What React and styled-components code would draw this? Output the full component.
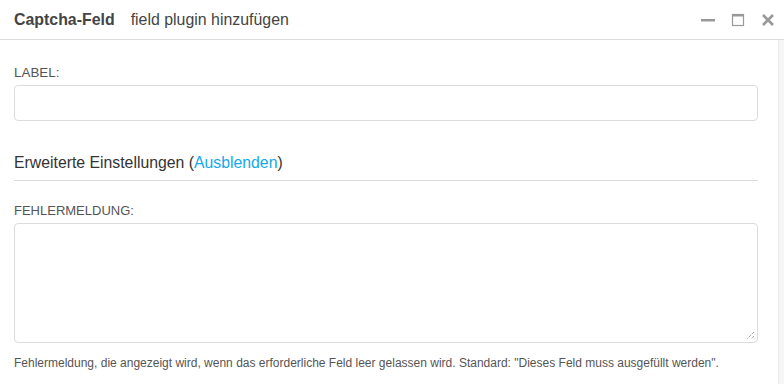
import React from 'react';
import styled, { createGlobalStyle } from 'styled-components';

const GlobalStyle = createGlobalStyle`
  html, body {
    margin: 0;
    padding: 0;
    background: #fff;
    font-family: "Liberation Sans", Arial, sans-serif;
    color: #333;
  }
`;

const Dialog = styled.div`
  width: 784px;
  height: 384px;
  display: flex;
  flex-direction: column;
  overflow: hidden;
`;

const Header = styled.div`
  height: 40px;
  display: flex;
  align-items: center;
  padding: 1px 9px 0 14px;
  border-bottom: 1px solid #dcdcdc;
  box-sizing: border-box;
  flex-shrink: 0;
`;

const Title = styled.span`
  font-size: 15.9px;
  font-weight: bold;
  color: #444;
  margin-right: 16px;
`;

const Subtitle = styled.span`
  font-size: 15.9px;
  color: #444;
  flex: 1;
`;

const WindowButtons = styled.div`
  display: flex;
  align-items: center;
  gap: 16px;
`;

const IconButton = styled.span`
  width: 14px;
  height: 14px;
  display: flex;
  align-items: center;
  justify-content: center;
  color: #999;
`;

const Main = styled.div`
  flex: 1;
  display: flex;
`;

const Body = styled.div`
  flex: 1;
  padding: 25px 20px 0 14px;
`;

const ScrollTrack = styled.div`
  width: 5px;
  background: #f5f5f5;
  border-left: 1px solid #ebebeb;
`;

const Label = styled.div`
  font-size: ${p => p.$size || 13}px;
  color: #555;
  line-height: 16px;
  margin-top: ${p => p.$top || 0}px;
  margin-bottom: 4px;
`;

const Input = styled.div`
  height: 36px;
  border: 1px solid #dcdcdc;
  border-radius: 4px;
  box-sizing: border-box;
`;

const TextArea = styled.div`
  position: relative;
  height: 120px;
  border: 1px solid #dcdcdc;
  border-radius: 4px;
  box-sizing: border-box;
`;

const Grip = styled.svg`
  position: absolute;
  right: 2px;
  bottom: 2px;
`;

const Section = styled.div`
  margin-top: 33px;
  padding-bottom: 8px;
  border-bottom: 1px solid #dcdcdc;
  font-size: 15.8px;
  line-height: 18px;
  color: #333;
`;

const Link = styled.a`
  color: #14a9ea;
  text-decoration: none;
`;

const Help = styled.div`
  margin-top: 13px;
  font-size: 12px;
  line-height: 15px;
  color: #555;
`;

export default function App() {
  return (
    <Dialog>
      <GlobalStyle />
      <Header>
        <Title>Captcha-Feld</Title>
        <Subtitle>field plugin hinzufügen</Subtitle>
        <WindowButtons>
          <IconButton>
            <svg width="14" height="14" viewBox="0 0 14 14">
              <rect x="0" y="6" width="14" height="2.5" fill="#999" />
            </svg>
          </IconButton>
          <IconButton>
            <svg width="14" height="14" viewBox="0 0 14 14">
              <rect x="1.5" y="1.5" width="11" height="11" fill="none" stroke="#999" strokeWidth="1.2" />
              <rect x="1.5" y="1.5" width="11" height="2" fill="#999" />
            </svg>
          </IconButton>
          <IconButton>
            <svg width="14" height="14" viewBox="0 0 14 14">
              <path d="M2 2 L12 12 M12 2 L2 12" stroke="#999" strokeWidth="2.6" strokeLinecap="butt" />
            </svg>
          </IconButton>
        </WindowButtons>
      </Header>
      <Main>
        <Body>
          <Label $size={13.4}>LABEL:</Label>
          <Input />
          <Section>
            Erweiterte Einstellungen (<Link href="#">Ausblenden</Link>)
          </Section>
          <Label $top={22}>FEHLERMELDUNG:</Label>
          <TextArea>
            <Grip width="9" height="9" viewBox="0 0 9 9">
              <path d="M8 1 L1 8 M8 5 L5 8" stroke="#777" strokeWidth="1" strokeDasharray="1 1" />
            </Grip>
          </TextArea>
          <Help>
            Fehlermeldung, die angezeigt wird, wenn das erforderliche Feld leer gelassen wird. Standard: "Dieses Feld muss ausgefüllt werden".
          </Help>
        </Body>
        <ScrollTrack />
      </Main>
    </Dialog>
  );
}
